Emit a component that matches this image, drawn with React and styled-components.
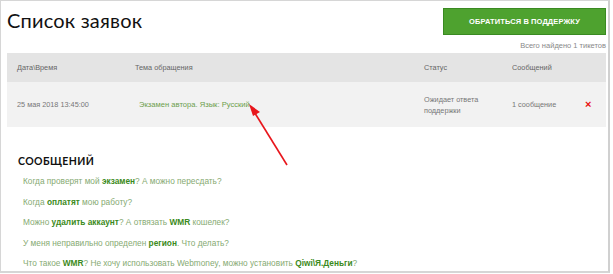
import React from 'react'
import styled, { createGlobalStyle } from 'styled-components';

const Global = createGlobalStyle`
    html, body { margin: 0; padding: 0; background: #fff; }
    body { font-family: "Liberation Sans", Arial, sans-serif; }
`

const columns = '118px 289px 88px 75px 1fr'

const faq = [
    [['Когда проверят мой '], ['экзамен', true], ['? А можно пересдать?']],
    [['Когда '], ['оплатят', true], [' мою работу?']],
    [['Можно '], ['удалить аккаунт', true], ['? А отвязать '], ['WMR', true], [' кошелек?']],
    [['У меня неправильно определен '], ['регион', true], ['. Что делать?']],
    [['Что такое '], ['WMR', true], ['? Не хочу использовать Webmoney, можно установить '], ['Qiwi\\Я.Деньги', true], ['?']],
]

function App() {
    return (
        <>
            <Global />
            <Frame>
                <TopRow>
                    <Title>Список заявок</Title>
                    <SupportButton>Обратиться в поддержку</SupportButton>
                </TopRow>
                <Found>Всего найдено 1 тикетов</Found>
                <Table>
                    <HeadRow>
                        <Cell>Дата\Время</Cell>
                        <Cell>Тема обращения</Cell>
                        <Cell>Статус</Cell>
                        <Cell>Сообщений</Cell>
                        <Cell />
                    </HeadRow>
                    <BodyRow>
                        <Cell>25 мая 2018 13:45:00</Cell>
                        <Cell indent>
                            <TopicLink href="#">Экзамен автора. Язык: Русский.</TopicLink>
                        </Cell>
                        <Cell>Ожидает ответа<br />поддержки</Cell>
                        <Cell>1 сообщение</Cell>
                        <Cell><Remove>×</Remove></Cell>
                    </BodyRow>
                </Table>
                <Heading>Сообщений</Heading>
                <FaqList>
                    {faq.map((parts, i) => (
                        <FaqItem key={i}>
                            {parts.map(([text, bold], j) => bold ? <b key={j}>{text}</b> : <span key={j}>{text}</span>)}
                        </FaqItem>
                    ))}
                </FaqList>
                <Arrow width="60" height="70" viewBox="0 0 60 70">
                    <line x1="42" y1="63" x2="8" y2="8" stroke="#e8161c" strokeWidth="1.6" />
                    <polygon points="4,2 15,10 8,14" fill="#e8161c" />
                </Arrow>
            </Frame>
        </>
    )
}

export default App

const Frame = styled.div`
    position: relative;
    box-sizing: border-box;
    width: 610px;
    height: 273px;
    border: 1px solid #d6d6d6;
    border-right: 2px solid #d0d0d0;
    border-bottom: 2px solid #d6d6d6;
    padding: 7px 2px 0 6px;
    overflow: hidden;
`
const TopRow = styled.div`
    display: flex;
    justify-content: space-between;
    align-items: flex-start;
    height: 27px;
`
const Title = styled.h1`
    margin: 1px 0 0 0;
    font-family: Lato, "Open Sans", sans-serif;
    font-weight: 400;
    font-size: 20px;
    line-height: 22px;
    letter-spacing: 0.2px;
    color: #111;
`
const SupportButton = styled.button`
    width: 163px;
    height: 27px;
    box-sizing: border-box;
    background: #4ea22f;
    border: 1px solid #3a8a22;
    color: #fff;
    font-family: "Liberation Sans", Arial, sans-serif;
    font-weight: 700;
    font-size: 7.5px;
    letter-spacing: 0.1px;
    text-transform: uppercase;
    cursor: pointer;
`
const Found = styled.div`
    margin-top: 6px;
    text-align: right;
    font-size: 7.5px;
    line-height: 10px;
    color: #888;
`
const Table = styled.div`
    margin-top: 2px;
`
const HeadRow = styled.div`
    display: grid;
    grid-template-columns: ${columns};
    align-items: center;
    height: 29px;
    background: #e4e4e4;
    color: #666;
`
const BodyRow = styled(HeadRow)`
    height: 45px;
    background: #f2f2f2;
    color: #777;
`
const Cell = styled.div`
    padding-left: ${(props) => props.indent ? 14 : 10}px;
    font-size: 7.3px;
    line-height: 11px;
`
const TopicLink = styled.a`
    color: #6c9e4c;
    text-decoration: none;
    font-size: 7.6px;
`
const Remove = styled.span`
    margin-left: -2px;
    color: #e81010;
    font-weight: 700;
    font-size: 11px;
`
const Heading = styled.h2`
    margin: 26px 0 0 11px;
    font-family: Lato, "Open Sans", sans-serif;
    font-weight: 700;
    font-size: 10.5px;
    line-height: 16px;
    letter-spacing: 0.4px;
    text-transform: uppercase;
    color: #111;
`
const FaqList = styled.ul`
    list-style: none;
    margin: 2px 0 0 0;
    padding: 0 0 0 16px;
`
const FaqItem = styled.li`
    height: 20.5px;
    line-height: 20.5px;
    font-size: 8.3px;
    color: #86aa72;
    b {
        color: #3b8a20;
        font-weight: 700;
    }
`
const Arrow = styled.svg`
    position: absolute;
    left: 244px;
    top: 101px;
`
